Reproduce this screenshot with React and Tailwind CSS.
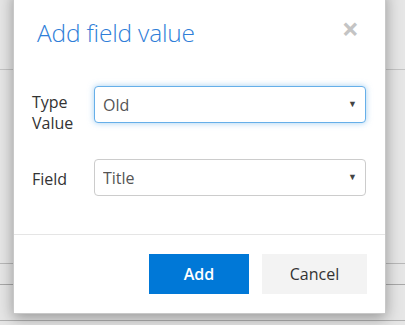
import React, { useState } from "react";

const SelectBox = ({ value, options, onChange, focused }) => (
  <div className="relative w-[272px]">
    <select
      value={value}
      onChange={(e) => onChange(e.target.value)}
      className={`w-full h-[37px] appearance-none rounded-[4px] bg-white pl-[8px] pr-8 text-[16px] text-[#555] outline-none border ${
        focused
          ? "border-[#66afe9] shadow-[0_0_6px_rgba(102,175,233,0.6)]"
          : "border-[#ccc]"
      }`}
    >
      {options.map((o) => (
        <option key={o}>{o}</option>
      ))}
    </select>
    <span className="pointer-events-none absolute right-[9px] top-[13px] text-[9px] leading-none text-[#444]">
      ▼
    </span>
  </div>
);

const App = () => {
  const [typeValue, setTypeValue] = useState("Old");
  const [field, setField] = useState("Title");

  return (
    <div
      className="relative h-[325px] w-[405px] overflow-hidden bg-[#e6e6e6]"
      style={{ fontFamily: '"Open Sans", "Noto Sans", sans-serif' }}
    >
      {/* page behind the overlay */}
      <div className="flex flex-col">
        <div className="h-[69px]" />
        <div className="h-px bg-[#c4c4c4]" />
        <div className="h-[193px]" />
        <div className="h-px bg-[#b8b8b8]" />
        <div className="h-[20px]" />
        <div className="h-px bg-[#a8a8a8]" />
        <div className="h-[35px]" />
        <div className="h-px bg-[#b0b0b0]" />
      </div>

      {/* dialog */}
      <div className="absolute left-[13px] top-[-10px] w-[373px] bg-white shadow-[0_4px_14px_rgba(0,0,0,0.35)] border border-[#c8c8c8]">
        <div className="flex items-start justify-between pl-[23px] pr-[26px] pt-[27px] pb-[38px]">
          <h2 className="text-[24.5px] font-light leading-[30px] text-[#2f7ed8] tracking-[-0.2px]">
            Add field value
          </h2>
          <button className="mt-[-4px] text-[30px] font-bold leading-none text-[#c4c4c4]">
            ×
          </button>
        </div>

        <div className="flex flex-col gap-[25px] pl-[18px] pr-[19px]">
          <div className="flex items-start">
            <label className="w-[62px] pt-[6px] text-[16px] leading-[21px] text-[#333]">
              Type Value
            </label>
            <SelectBox
              value={typeValue}
              options={["Old", "New"]}
              onChange={setTypeValue}
              focused
            />
          </div>
          <div className="flex items-center">
            <label className="w-[62px] pt-[2px] text-[16px] text-[#333]">Field</label>
            <SelectBox
              value={field}
              options={["Title", "Name", "Description"]}
              onChange={setField}
            />
          </div>
        </div>

        <div className="mt-[38px] h-px bg-[#e5e5e5]" />

        <div className="flex justify-end gap-[13px] pr-[18px] pt-[19px] pb-[19px]">
          <button className="h-[40px] w-[100px] bg-[#0078d7] text-[16px] font-semibold text-white">
            Add
          </button>
          <button className="h-[40px] w-[105px] bg-[#f3f3f3] text-[16px] text-[#333]">
            Cancel
          </button>
        </div>
      </div>
    </div>
  );
};

export default App;
